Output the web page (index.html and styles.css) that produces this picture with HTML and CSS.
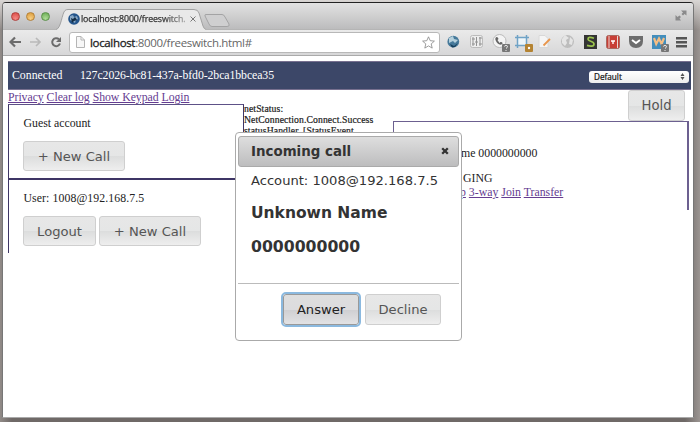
FILE: index.html
```html
<!DOCTYPE html>
<html lang="en">
<head>
<meta charset="utf-8">
<title>localhost:8000/freeswitch.html</title>
<link rel="stylesheet" href="styles.css">
</head>
<body>
<div class="window">
  <div class="tabstrip">
    <div class="lights"><i class="red"></i><i class="amber"></i><i class="green"></i></div>
    <div class="tab">
      <svg class="tab-shape" width="150" height="21" viewBox="0 0 150 21"><path d="M0 20.500C5 20 6 4 9 1.500Q10 .5 12 .5H138Q142 .5 143 4L147 17Q148 20 150 20.500V21H0Z" fill="#e9e9e9"/><path d="M0 20.500C5 20 6 4 9 1.500Q10 .5 12 .5H138Q142 .5 143 4L147 17Q148 20 150 20.500" fill="none" stroke="#a1a1a1"/></svg>
      <div class="tab-content">
        <svg width="12" height="12" viewBox="0 0 12 12"><circle cx="6" cy="6" r="5.800" fill="#24558b"/><path d="M2 3l3-1 1 2 3-1 1 3-2 1-1 3-3-2-2-1z" fill="#87a7c5"/><path d="M3 5l2 1 2-2 2 3-3 1-2 2z" fill="#142e46"/></svg>
        <span class="tab-title">localhost:8000/freeswitch.</span>
        <svg class="tab-close" width="6" height="6" viewBox="0 0 6 6"><path d="M.5.5l5 5M5.500.5l-5 5" stroke="#777"/></svg>
      </div>
    </div>
    <svg class="newtab" width="27" height="13" viewBox="0 0 27 13"><path d="M2 .5H18Q20 .5 21 3L25 10Q26 12.500 23 12.500H8Q6 12.500 5 10L1 2Q.5.5 2 .5Z" fill="#cfcfd0" stroke="#a3a3a4"/></svg>
    <svg class="expand" width="12" height="11" viewBox="0 0 12 11"><path d="M6 .5h5.500v5L9.500 4 8 5.500 6.500 4 8 2.500zM.5 5v5.500H6L4.500 8.500 6 7 4.500 5.500 2.500 7z" fill="#8a8a8b"/></svg>
  </div>
  <div class="toolbar">
    <svg class="nav" width="54" height="12" viewBox="0 0 54 12"><path d="M12 6H2M6 1.500L1.500 6 6 10.500" fill="none" stroke="#6c6c6c" stroke-width="2.200"/><path d="M21 6h9M27 2l4 4-4 4" fill="none" stroke="#b9b9b9" stroke-width="1.700"/><path d="M50 3.300A4 4 0 1 0 51 7.500" fill="none" stroke="#6c6c6c" stroke-width="2"/><path d="M52 1v5h-5z" fill="#6c6c6c"/></svg>
    <div class="address">
      <svg width="9" height="12" viewBox="0 0 9 12"><path d="M.5.5H5L8.500 4v7.500h-8zM5 .5V4h3.500" fill="#f7f7f7" stroke="#b5b5b5"/></svg>
      <span class="url"><b>localhost</b>:8000/freeswitch.html#</span>
      <svg class="star" width="13" height="13" viewBox="0 0 13 13"><path d="M6.500.8l1.700 3.900 4.200.4-3.200 2.800 1 4.200-3.700-2.200-3.700 2.200 1-4.200L.6 5.100l4.200-.4z" fill="#fff" stroke="#858585" stroke-width=".8"/></svg>
    </div>
    <svg class="extensions" width="244" height="20" viewBox="446 32 244 20">
      <circle cx="453.300" cy="41.700" r="5.900" fill="#46799a"/><path d="M449 38l4-2 1 3 4 1-3 3-2-2-4 2z" fill="#b5d0dc"/><path d="M450 44l4 2 4-3-3 4-3 .5z" fill="#163e5b"/>
      <rect x="470.500" y="35.500" width="12" height="12" rx="2" fill="#eee" stroke="#bbb"/><path d="M473 37v9M476.500 37v9M480 37v9M472 39h3M475 42h3M479 38h3M472 44h3M479 44h3" stroke="#929292" fill="none"/>
      <circle cx="499.500" cy="41" r="6.500" fill="#f4f4f4" stroke="#bbb"/><path d="M495.500 38c1-2 2.500-1 3 1l-1 1 2 3 1-1c2 0 3 1.500 1 2.500-3 1-7-4-6-6.500z" fill="#666"/>
      <rect x="502" y="44" width="8" height="8" rx="1" fill="#777"/><path d="M504.500 46.500q0-1 1.500-1t1.500 1-1.500 2m0 1.500v1" fill="none" stroke="#eee"/>
      <rect x="517" y="38" width="10" height="7" fill="#eef6fa"/><path d="M515 37.500h14M515 45.500h12M517.500 35v13M526.500 35v9" stroke="#70a3c6" stroke-width="1.500"/><rect x="525" y="44" width="8" height="8" rx="1" fill="#b48332"/><circle cx="529" cy="48" r="1.200" fill="#fff"/>
      <path d="M539 35.500h6l3 3v9h-9z" fill="#f5f5f5" stroke="#d8d8d8"/><path d="M543.500 45.500L550 39" stroke="#e9974d" stroke-width="1.800"/>
      <circle cx="567.500" cy="41.500" r="6.500" fill="#bdbdbd"/><path d="M562 39l3-4 4 3-3 2 1 3-2 3-3-3zM570 37l3 3-1 5-3-1z" fill="#e5e5e5"/>
      <rect x="584" y="35" width="13" height="14" fill="#343434"/><path d="M594 38.200q-6-2-6 1c0 2.500 6 1.500 6 4.700 0 3-4 2.500-7 1.500" fill="none" stroke="#9bc34d" stroke-width="1.700"/>
      <rect x="606.500" y="35.500" width="13" height="13" rx="2" fill="#c83f36" stroke="#a96860"/><path d="M609 36v12M617.500 36v12" stroke="#eadad4"/><path d="M611 41h4M613 41v3" stroke="#fff" stroke-width="1.400"/>
      <path d="M629 36h14v5q0 7-7 7t-7-7z" fill="#6d6d6d"/><path d="M632 40l4 3 4-3" fill="none" stroke="#fff" stroke-width="2"/>
      <rect x="652" y="35" width="14" height="14" fill="#438ebc"/><path d="M654 38l2.200 6 2.800-5.500 2.600 5.500 2.400-6" fill="none" stroke="#f5bd83" stroke-width="2.200"/><rect x="661" y="44" width="8" height="8" rx="1" fill="#777"/><path d="M663.500 46.500q0-1 1.500-1t1.500 1-1.500 2m0 1.500v1" fill="none" stroke="#eee"/>
      <path d="M676 38.200h11M676 42.200h11M676 46.200h11" stroke="#555" stroke-width="2.600"/>
    </svg>
  </div>
  <main class="page">
    <header class="status"><span class="state">Connected</span><span class="session">127c2026-bc81-437a-bfd0-2bca1bbcea35</span>
      <div class="select"><span>Default</span><svg width="5" height="7" viewBox="0 0 5 7"><path d="M.5 3L2.500 0l2 3zM.5 4L2.500 7l2-3z" fill="#555"/></svg></div>
    </header>
    <div class="columns">
      <section class="left">
        <nav class="links"><a>Privacy</a> <a>Clear log</a> <a>Show Keypad</a> <a>Login</a></nav>
        <div class="account guest"><p>Guest account</p><div class="actions"><button class="wide">+ New Call</button></div></div>
        <div class="account user"><p>User: 1008@192.168.7.5</p><div class="actions"><button class="logout">Logout</button><button class="wide">+ New Call</button></div></div>
      </section>
      <section class="log">netStatus:<br>NetConnection.Connect.Success<br>statusHandler. [StatusEvent</section>
      <section class="right">
        <button class="hold">Hold</button>
        <div class="call"><p class="caller">me 0000000000</p><p class="ringing">GING</p><p class="calllinks"><a>p</a> <a>3-way</a> <a>Join</a> <a>Transfer</a></p></div>
      </section>
    </div>
  </main>
</div>
<div class="dialog">
  <div class="titlebar"><span>Incoming call</span><svg width="8" height="8" viewBox="0 0 8 8"><path d="M1.200 1.200l5.600 5.600M6.800 1.200L1.200 6.800" stroke="#333" stroke-width="2.300"/></svg></div>
  <div class="body"><p class="acct">Account: 1008@192.168.7.5</p><h2 class="name">Unknown Name</h2><h2 class="number">0000000000</h2></div>
  <div class="buttons"><button class="answer">Answer</button><button class="decline">Decline</button></div>
</div>
</body>
</html>
```
FILE: styles.css
```css
* { box-sizing: border-box; }
body { margin: 0; width: 700px; height: 422px; overflow: hidden; padding: 2px 6px 4px 2px; background: linear-gradient(#d9d6d4 0, #d9d6d400 30px), linear-gradient(90deg, #918b88 0, #6f6967 12px, #6f6967 685px, #9b9592 700px); font: 11.8px "Liberation Serif", serif; color: #222; }
p, h2 { margin: 0; }
svg { display: block; flex: none; }
.window { height: 416px; border: 1px solid #777; border-top-color: #222; border-bottom-color: #aaa; border-radius: 4px 4px 0 0; background: #fff; overflow: hidden; }
.tabstrip { height: 27px; display: flex; background: linear-gradient(#e2e2e2, #bcbcbd); border-bottom: 1px solid #b5b5b5; }
.lights { display: flex; gap: 6px; padding: 9px 0 0 8px; width: 53px; }
.lights i { width: 9px; height: 9px; border-radius: 50%; border: 1px solid; }
.lights .red { background: radial-gradient(circle at 50% 80%, #f58a85, #d94842); border-color: #b1403d; }
.lights .amber { background: radial-gradient(circle at 50% 80%, #f8cf84, #d99935); border-color: #b58138; }
.lights .green { background: radial-gradient(circle at 50% 80%, #afdc98, #66a94f); border-color: #5b914a; }
.tab { display: grid; width: 148px; height: 21px; margin-top: 6px; }
.tab-shape, .tab-content { grid-area: 1 / 1; }
.tab-content { display: flex; align-items: center; padding: 0 0 2px 12px; }
.tab-title { font: 8.8px "Open Sans", sans-serif; letter-spacing: -.11px; -webkit-text-stroke: .25px #333; width: 108px; margin-left: 1px; white-space: nowrap; color: #333; mask-image: linear-gradient(90deg, #000 75%, #0006 96%); }
.tab-close { margin-left: 1px; }
.newtab { margin: 11px 0 0 0; }
.expand { margin: 7px 6px 0 auto; }
.toolbar { height: 26px; display: flex; align-items: center; background: linear-gradient(#eaeaea, #d7d7d8); border-bottom: 1px solid #aaa; }
.nav { margin-left: 6px; margin-top: -1px; }
.address { margin-left: 6px; margin-top: -1px; width: 371px; height: 21px; display: flex; align-items: center; background: #fff; border: 1px solid #b8b8b8; border-radius: 3px; padding: 0 4px 0 6px; }
.url { font: 11.5px "Open Sans", sans-serif; letter-spacing: -.34px; margin-left: 5px; color: #666; white-space: nowrap; }
.url b { font-weight: 400; color: #222; -webkit-text-stroke: .3px #222; }
.star { margin-left: auto; }
.extensions { margin-left: 6px; margin-top: -2px; }
.page { padding: 5px 2px 0 5px; }
.status { height: 29px; background: #3c4768; color: #fff; display: flex; align-items: center; padding: 0 2px 0 4px; border-top: 1px solid #77708f; border-bottom: 1px solid #77708f; }
.state { width: 68px; }
.session { letter-spacing: -.09px; }
.select { margin-left: auto; margin-top: 2px; width: 100px; height: 12px; background: linear-gradient(#fff, #eee); border-radius: 3px; display: flex; align-items: center; justify-content: space-between; padding: 0 4px 0 5px; font: 8.2px "Open Sans", sans-serif; -webkit-text-stroke: .2px #111; color: #111; }
.columns { display: grid; grid-template-columns: 236px 149px 296px; height: 163px; }
a { color: #653c91; text-decoration: underline; }
.links { height: 14px; line-height: 15px; white-space: nowrap; letter-spacing: -.05px; }
.account { border: 1px solid #3e3565; border-bottom: 0; padding-left: 14px; }
.account p { line-height: 14px; padding-left: .5px; }
.guest { height: 74px; padding-top: 11px; border-top-color: #5d5187; }
.user { height: 75px; padding-top: 11px; border-top-width: 2px; border-right: 0; }
.user p { letter-spacing: .08px; }
.actions { display: flex; gap: 3px; margin-top: 11px; }
button { height: 30px; margin: 0; padding: 0; border: 1px solid #cfcfcf; border-radius: 3px; background: linear-gradient(#e7e7e7 0, #e5e6e6 50%, #dcdddd 51%, #eeeeee 100%); color: #555; font: 13.1px "DejaVu Sans", Verdana, sans-serif; white-space: nowrap; }
.wide { width: 102px; }
.logout { width: 73px; }
.log { padding: 13px 0 0; font-size: 9.7px; line-height: 11.2px; letter-spacing: .1px; white-space: nowrap; -webkit-text-stroke: .2px #222; }
.right { display: flex; flex-direction: column; }
.hold { width: 57px; height: 31px; align-self: flex-end; margin-right: 4px; font-size: 13.2px; flex: none; }
.call { border: 1px solid #6c6090; border-right-width: 2px; border-bottom: 0; padding: 24px 0 0 66px; height: 89px; }
.call p { line-height: 14px; }
.call .caller { padding-left: 1px; }
.call .ringing { margin-top: 11px; padding-left: 3px; }
.dialog { position: absolute; left: 235px; top: 132px; width: 227px; height: 209px; background: #fff; border: 1px solid #aaa; border-radius: 4px; padding: 3px 2px; font-family: "DejaVu Sans", Verdana, sans-serif; color: #333; }
.titlebar { height: 31px; border: 1px solid #aaa; border-radius: 3px; background: linear-gradient(#dedede, #bdbdbe); display: flex; align-items: center; justify-content: space-between; padding: 0 9px 1px 12px; font-weight: bold; font-size: 13.4px; }
.body { height: 117px; padding: 6px 0 0 13px; border-bottom: 1px solid #bbb; white-space: nowrap; }
.acct { font-size: 13.1px; line-height: 16px; }
.name { font-size: 15.5px; line-height: 20px; margin-top: 14px; }
.number { font-size: 15.7px; line-height: 20px; margin-top: 14px; }
.buttons { display: flex; gap: 6px; padding: 10px 0 0 45px; }
.buttons button { height: 31px; width: 76px; font-size: 13.1px; }
.buttons .answer { color: #222; border-color: #999; outline: 2px solid #8bb9df; background: linear-gradient(#dedede 0, #dcdcde 50%, #cfcfd2 51%, #e2e2e4 100%); }
```
